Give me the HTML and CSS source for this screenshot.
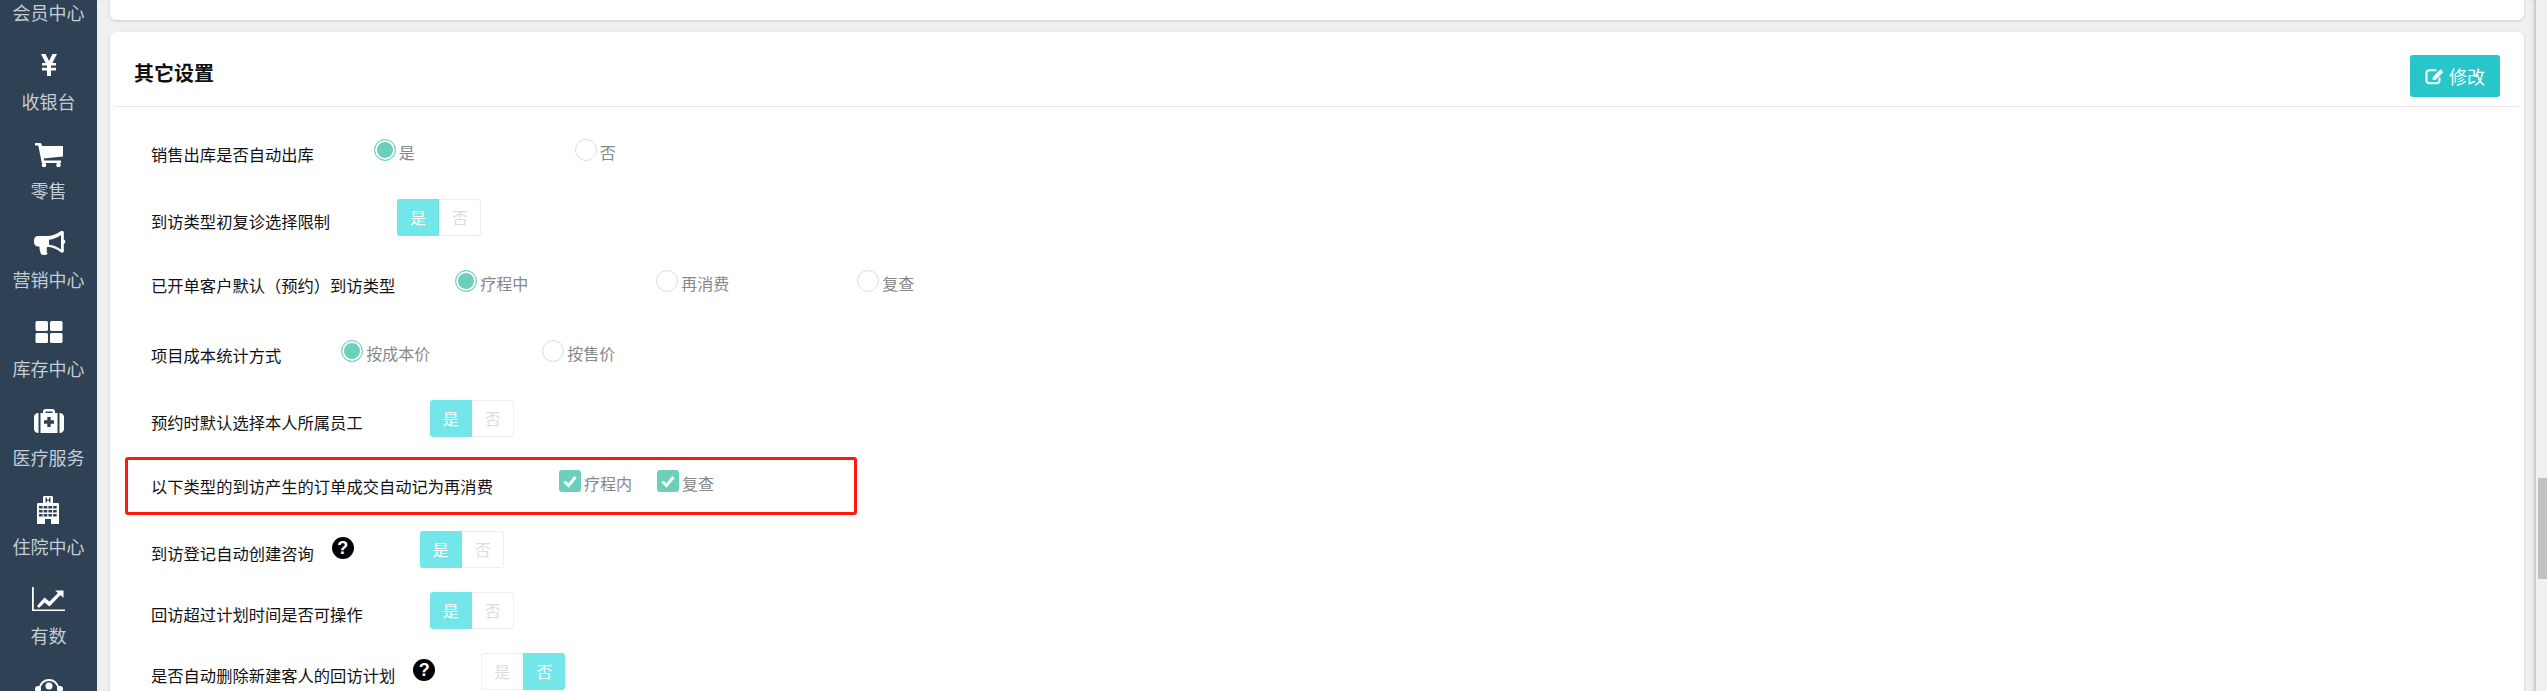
FILE: index.html
```html
<!DOCTYPE html>
<html lang="zh-CN">
<head>
    <meta charset="UTF-8">
    <title>其它设置</title>
    <link rel="stylesheet" href="styles.css">
</head>
<body>
    <nav class="sidebar">
        <div class="nav-list">
            <a class="nav-item"><span class="nav-icon"></span><span>会员中心</span></a>
            <a class="nav-item">
                <svg class="nav-icon" viewBox="0 0 34 28"><path d="M9 3h4.600l3.400 7 3.400-7H25l-4.600 9H24v2.600h-5v2.200h5v2.600h-5V25h-4v-5.600h-5v-2.600h5v-2.200h-5V12h3.600z"/></svg>
                <span>收银台</span>
            </a>
            <a class="nav-item">
                <svg class="nav-icon" viewBox="0 0 34 28"><path d="M3 3h5c.8 0 1.300.4 1.500 1.100L10 6h21v10.500L11.700 18.500l.4 2H29v2.500H9.800L6.300 5.500H3z"/><circle cx="12" cy="25" r="2.300"/><circle cx="26.500" cy="25" r="2.300"/></svg>
                <span>零售</span>
            </a>
            <a class="nav-item">
                <svg class="nav-icon" viewBox="0 0 34 28"><path d="M29 2h1.500c.8 0 1.300.6 1.300 1.300v7.200c1 .4 1.500 1.200 1.500 2.200s-.5 1.800-1.500 2.200v7.300c0 .7-.5 1.300-1.300 1.300H29c-3.500-3.200-8-5.300-13-5.800-1.600.4-1.800 2.300-.8 3.300-.9 1.100-.8 2.200.4 3.400-.8 1.700-4.300 2.100-6.300 1.200-1.100-2.300-1.900-5-1.900-8H6c-2.300 0-4-1.800-4-4v-2.700c0-2.200 1.700-4 4-4h9c5.300 0 10.300-2.100 14-5zm0 4c-3.500 2.500-7.500 4.200-12 4.800v5c4.500.5 8.500 2.200 12 4.800z"/></svg>
                <span>营销中心</span>
            </a>
            <a class="nav-item">
                <svg class="nav-icon" viewBox="0 0 34 28"><rect x="3.500" y="3" width="12.500" height="10" rx="1.500"/><rect x="18" y="3" width="12.500" height="10" rx="1.500"/><rect x="3.500" y="15" width="12.500" height="10" rx="1.500"/><rect x="18" y="15" width="12.500" height="10" rx="1.500"/></svg>
                <span>库存中心</span>
            </a>
            <a class="nav-item">
                <svg class="nav-icon" viewBox="0 0 34 28"><path fill-rule="evenodd" d="M11 6V4.500C11 3 12.200 2 13.500 2h7C21.800 2 23 3 23 4.500V6h2.500v20h-17V6zm2.500 0h7V4.500h-7zM15.300 10v3.300H12v3.400h3.300V20h3.400v-3.300H22v-3.400h-3.300V10z"/><path d="M6.500 6v20C3.700 26 2 24.300 2 22V10c0-2.300 1.700-4 4.500-4zM27.500 6c2.800 0 4.500 1.700 4.500 4v12c0 2.300-1.700 4-4.500 4z"/></svg>
                <span>医疗服务</span>
            </a>
            <a class="nav-item">
                <svg class="nav-icon" viewBox="0 0 34 28"><path fill-rule="evenodd" d="M11 7V1.300C11 .6 11.500 0 12.300 0h7.400c.8 0 1.300.6 1.300 1.300V7h4.700c.8 0 1.300.6 1.300 1.300V28H5V8.300C5 7.600 5.500 7 6.300 7zM13.500 1.500v5h1.400V4.800h2.200v1.700h1.400v-5h-1.400v2h-2.200v-2zM7 10v2.600h3.600V10zm4.700 0v2.600h3.600V10zm4.700 0v2.600H20V10zm4.700 0v2.600h3.600V10zM7 14v2.600h3.600V14zm4.700 0v2.600h3.600V14zm4.700 0v2.600H20V14zm4.700 0v2.600h3.600V14zM7 18v2.600h3.600V18zm4.700 0v2.600h3.600V18zm4.700 0v2.600H20V18zm4.700 0v2.600h3.600V18zM13 23v5h6v-5z"/></svg>
                <span>住院中心</span>
            </a>
            <a class="nav-item">
                <svg class="nav-icon" viewBox="0 0 34 28"><path d="M0 2h1.800v22.500H33V26H0z"/><path d="M5 21l7.500-8.500 5 4L26 8l-3-2.500h8.500V13l-3-3-11 11.500-5-4L7 23z"/></svg>
                <span>有数</span>
            </a>
            <a class="nav-item">
                <svg class="nav-icon" viewBox="0 0 34 28"><path class="nav-arc" d="M7 15c2-7 6-9 10-9s8 2 10 9"/><circle cx="6" cy="15" r="3"/><circle cx="28" cy="15" r="3"/><circle cx="17" cy="12" r="3.500"/><path d="M12 28c0-7 2-10 5-10s5 3 5 10z"/></svg>
            </a>
        </div>
    </nav>

    <main class="content">
        <div class="card card-prev"></div>

        <section class="card">
            <header class="card-header">
                <h2>其它设置</h2>
                <button class="btn-edit">
                    <svg class="btn-icon" viewBox="0 0 20 18"><path class="btn-icon-box" d="M14.500 10.500v3c0 1.700-1.100 2.800-2.800 2.800H4.300c-1.700 0-2.800-1.100-2.800-2.800V6c0-1.700 1.100-2.800 2.800-2.800h7"/><path class="btn-icon-pen" d="M15.500 2.300l2.800 2.800-7.800 7.800H7.700v-2.800z"/></svg>
                    修改
                </button>
            </header>

            <div class="form-list">
                <div class="form-row">
                    <span class="form-label">销售出库是否自动出库</span>
                    <div class="radio-group">
                        <label class="radio checked"><i></i><span>是</span></label>
                        <label class="radio"><i></i><span>否</span></label>
                    </div>
                </div>
                <div class="form-row">
                    <span class="form-label">到访类型初复诊选择限制</span>
                    <div class="toggle"><span class="on">是</span><span>否</span></div>
                </div>
                <div class="form-row">
                    <span class="form-label">已开单客户默认（预约）到访类型</span>
                    <div class="radio-group">
                        <label class="radio checked"><i></i><span>疗程中</span></label>
                        <label class="radio"><i></i><span>再消费</span></label>
                        <label class="radio"><i></i><span>复查</span></label>
                    </div>
                </div>
                <div class="form-row">
                    <span class="form-label">项目成本统计方式</span>
                    <div class="radio-group">
                        <label class="radio checked"><i></i><span>按成本价</span></label>
                        <label class="radio"><i></i><span>按售价</span></label>
                    </div>
                </div>
                <div class="form-row">
                    <span class="form-label">预约时默认选择本人所属员工</span>
                    <div class="toggle"><span class="on">是</span><span>否</span></div>
                </div>
                <div class="form-row marked">
                    <span class="form-label">以下类型的到访产生的订单成交自动记为再消费</span>
                    <div class="check-group">
                        <label class="check">
                            <svg viewBox="0 0 22 22"><rect width="22" height="22" rx="3"/><path d="M5.500 11.500l4 4 7-8.500"/></svg>
                            <span>疗程内</span>
                        </label>
                        <label class="check">
                            <svg viewBox="0 0 22 22"><rect width="22" height="22" rx="3"/><path d="M5.500 11.500l4 4 7-8.500"/></svg>
                            <span>复查</span>
                        </label>
                    </div>
                </div>
                <div class="form-row">
                    <span class="form-label">到访登记自动创建咨询</span>
                    <span class="help">?</span>
                    <div class="toggle"><span class="on">是</span><span>否</span></div>
                </div>
                <div class="form-row">
                    <span class="form-label">回访超过计划时间是否可操作</span>
                    <div class="toggle"><span class="on">是</span><span>否</span></div>
                </div>
                <div class="form-row">
                    <span class="form-label">是否自动删除新建客人的回访计划</span>
                    <span class="help">?</span>
                    <div class="toggle toggle-near"><span>是</span><span class="on">否</span></div>
                </div>
            </div>
        </section>
    </main>

    <div class="scrollbar"><div class="scrollbar-thumb"></div></div>
</body>
</html>
```

FILE: styles.css
```css
* {
    margin: 0;
    padding: 0;
    box-sizing: border-box;
}

html,
body {
    height: 691px;
    overflow: hidden;
}

body {
    display: flex;
    font-family: "Noto Sans CJK SC", "Liberation Sans", sans-serif;
    font-size: 16px;
    background-color: #f0f0f0;
    color: #222;
}

/* left menu */
.sidebar {
    width: 97px;
    flex-shrink: 0;
    height: 691px;
    overflow: hidden;
    background-color: #2f4154;
}

.nav-list {
    margin-top: -45px;
}

.nav-item {
    display: flex;
    flex-direction: column;
    align-items: center;
    height: 89px;
    padding-top: 7px;
    font-size: 18px;
    line-height: 24px;
    color: #c4ccd4;
}

.nav-icon {
    display: block;
    width: 34px;
    height: 28px;
    margin-bottom: 10px;
    fill: #fff;
}

.nav-arc {
    fill: none;
    stroke: #fff;
    stroke-width: 2;
}

/* main area */
.content {
    flex: 1;
    padding: 0 12px 0 13px;
    box-shadow: inset -3px 0 3px -1px #c4c4c4;
}

.card {
    background-color: #fff;
    border-radius: 6px;
    box-shadow: 0 1px 3px rgba(0, 0, 0, 0.16);
}

.card-prev {
    height: 20px;
    margin-bottom: 12px;
    border-radius: 0 0 6px 6px;
}

.card-header {
    display: flex;
    justify-content: space-between;
    align-items: flex-start;
    height: 75px;
    margin: 0 5px;
    padding: 23px 19px 0;
    border-bottom: 1px solid #e8e8e8;
}

.card-header h2 {
    margin-top: 4px;
    font-size: 20px;
    line-height: 28px;
    font-weight: 700;
    color: #111;
}

.btn-edit {
    display: flex;
    align-items: center;
    justify-content: center;
    gap: 4px;
    width: 90px;
    height: 42px;
    border: none;
    border-radius: 3px;
    background-color: #26c6ca;
    color: #fff;
    font-family: inherit;
    font-size: 18px;
}

.btn-icon {
    width: 20px;
    height: 18px;
}

.btn-icon-box {
    fill: none;
    stroke: #fff;
    stroke-width: 2;
}

.btn-icon-pen {
    fill: #fff;
}

/* setting rows */
.form-list {
    display: grid;
    grid-template-rows: 67px 64px 70px 67px 64px 67px 61px 61px 61px;
    align-items: start;
    padding: 24px 0 0 41px;
}

.form-row {
    position: relative;
    display: flex;
    align-items: center;
    height: 38px;
}

.form-label {
    padding-top: 7px;
    font-size: 16.3px;
    line-height: 24px;
    color: #111;
    white-space: nowrap;
}

.marked::after {
    content: "";
    position: absolute;
    top: -6px;
    left: -26px;
    width: 732px;
    height: 58px;
    border: 3px solid #ff1a0f;
    border-radius: 3px;
    box-sizing: border-box;
}

.radio-group {
    display: flex;
    margin-left: 60px;
}

.radio {
    display: flex;
    align-items: center;
    width: 201px;
    color: #888;
}

.radio i {
    width: 22px;
    height: 22px;
    margin-right: 3px;
    border: 1px solid #ddd;
    border-radius: 50%;
}

.radio.checked i {
    border-color: #6fd3bf;
    background-color: #6ccfba;
    box-shadow: inset 0 0 0 2px #fff;
}

.radio span,
.check span {
    padding-top: 4px;
    line-height: 22px;
}

.toggle {
    display: flex;
    width: 84px;
    height: 37px;
    margin-left: 67px;
    border-radius: 3px;
    box-shadow: inset 0 0 0 1px #eee;
    overflow: hidden;
}

.toggle span {
    flex: 1;
    line-height: 37px;
    text-align: center;
    color: #ddd;
}

.toggle .on {
    background-color: #72e6e8;
    color: #fff;
}

.check-group {
    display: flex;
    gap: 25px;
    margin: 0 0 2px 66px;
}

.check {
    display: flex;
    align-items: center;
    gap: 3px;
    color: #888;
}

.check svg {
    width: 22px;
    height: 22px;
}

.check rect {
    fill: #6ccfba;
}

.check path {
    fill: none;
    stroke: #fff;
    stroke-width: 3;
}

.help {
    width: 22px;
    height: 22px;
    margin: 0 0 2px 18px;
    border-radius: 50%;
    background-color: #000;
    color: #fff;
    font-family: "Liberation Sans", sans-serif;
    font-size: 18px;
    font-weight: 700;
    line-height: 22px;
    text-align: center;
}

.help + .toggle {
    margin-left: 66px;
}

.help + .toggle-near {
    margin-left: 46px;
}

/* page scrollbar */
.scrollbar {
    width: 11px;
    flex-shrink: 0;
    padding: 478px 0 0 2px;
    background-color: #f1f1f1;
}

.scrollbar-thumb {
    height: 101px;
    background-color: #c1c1c1;
}
```
